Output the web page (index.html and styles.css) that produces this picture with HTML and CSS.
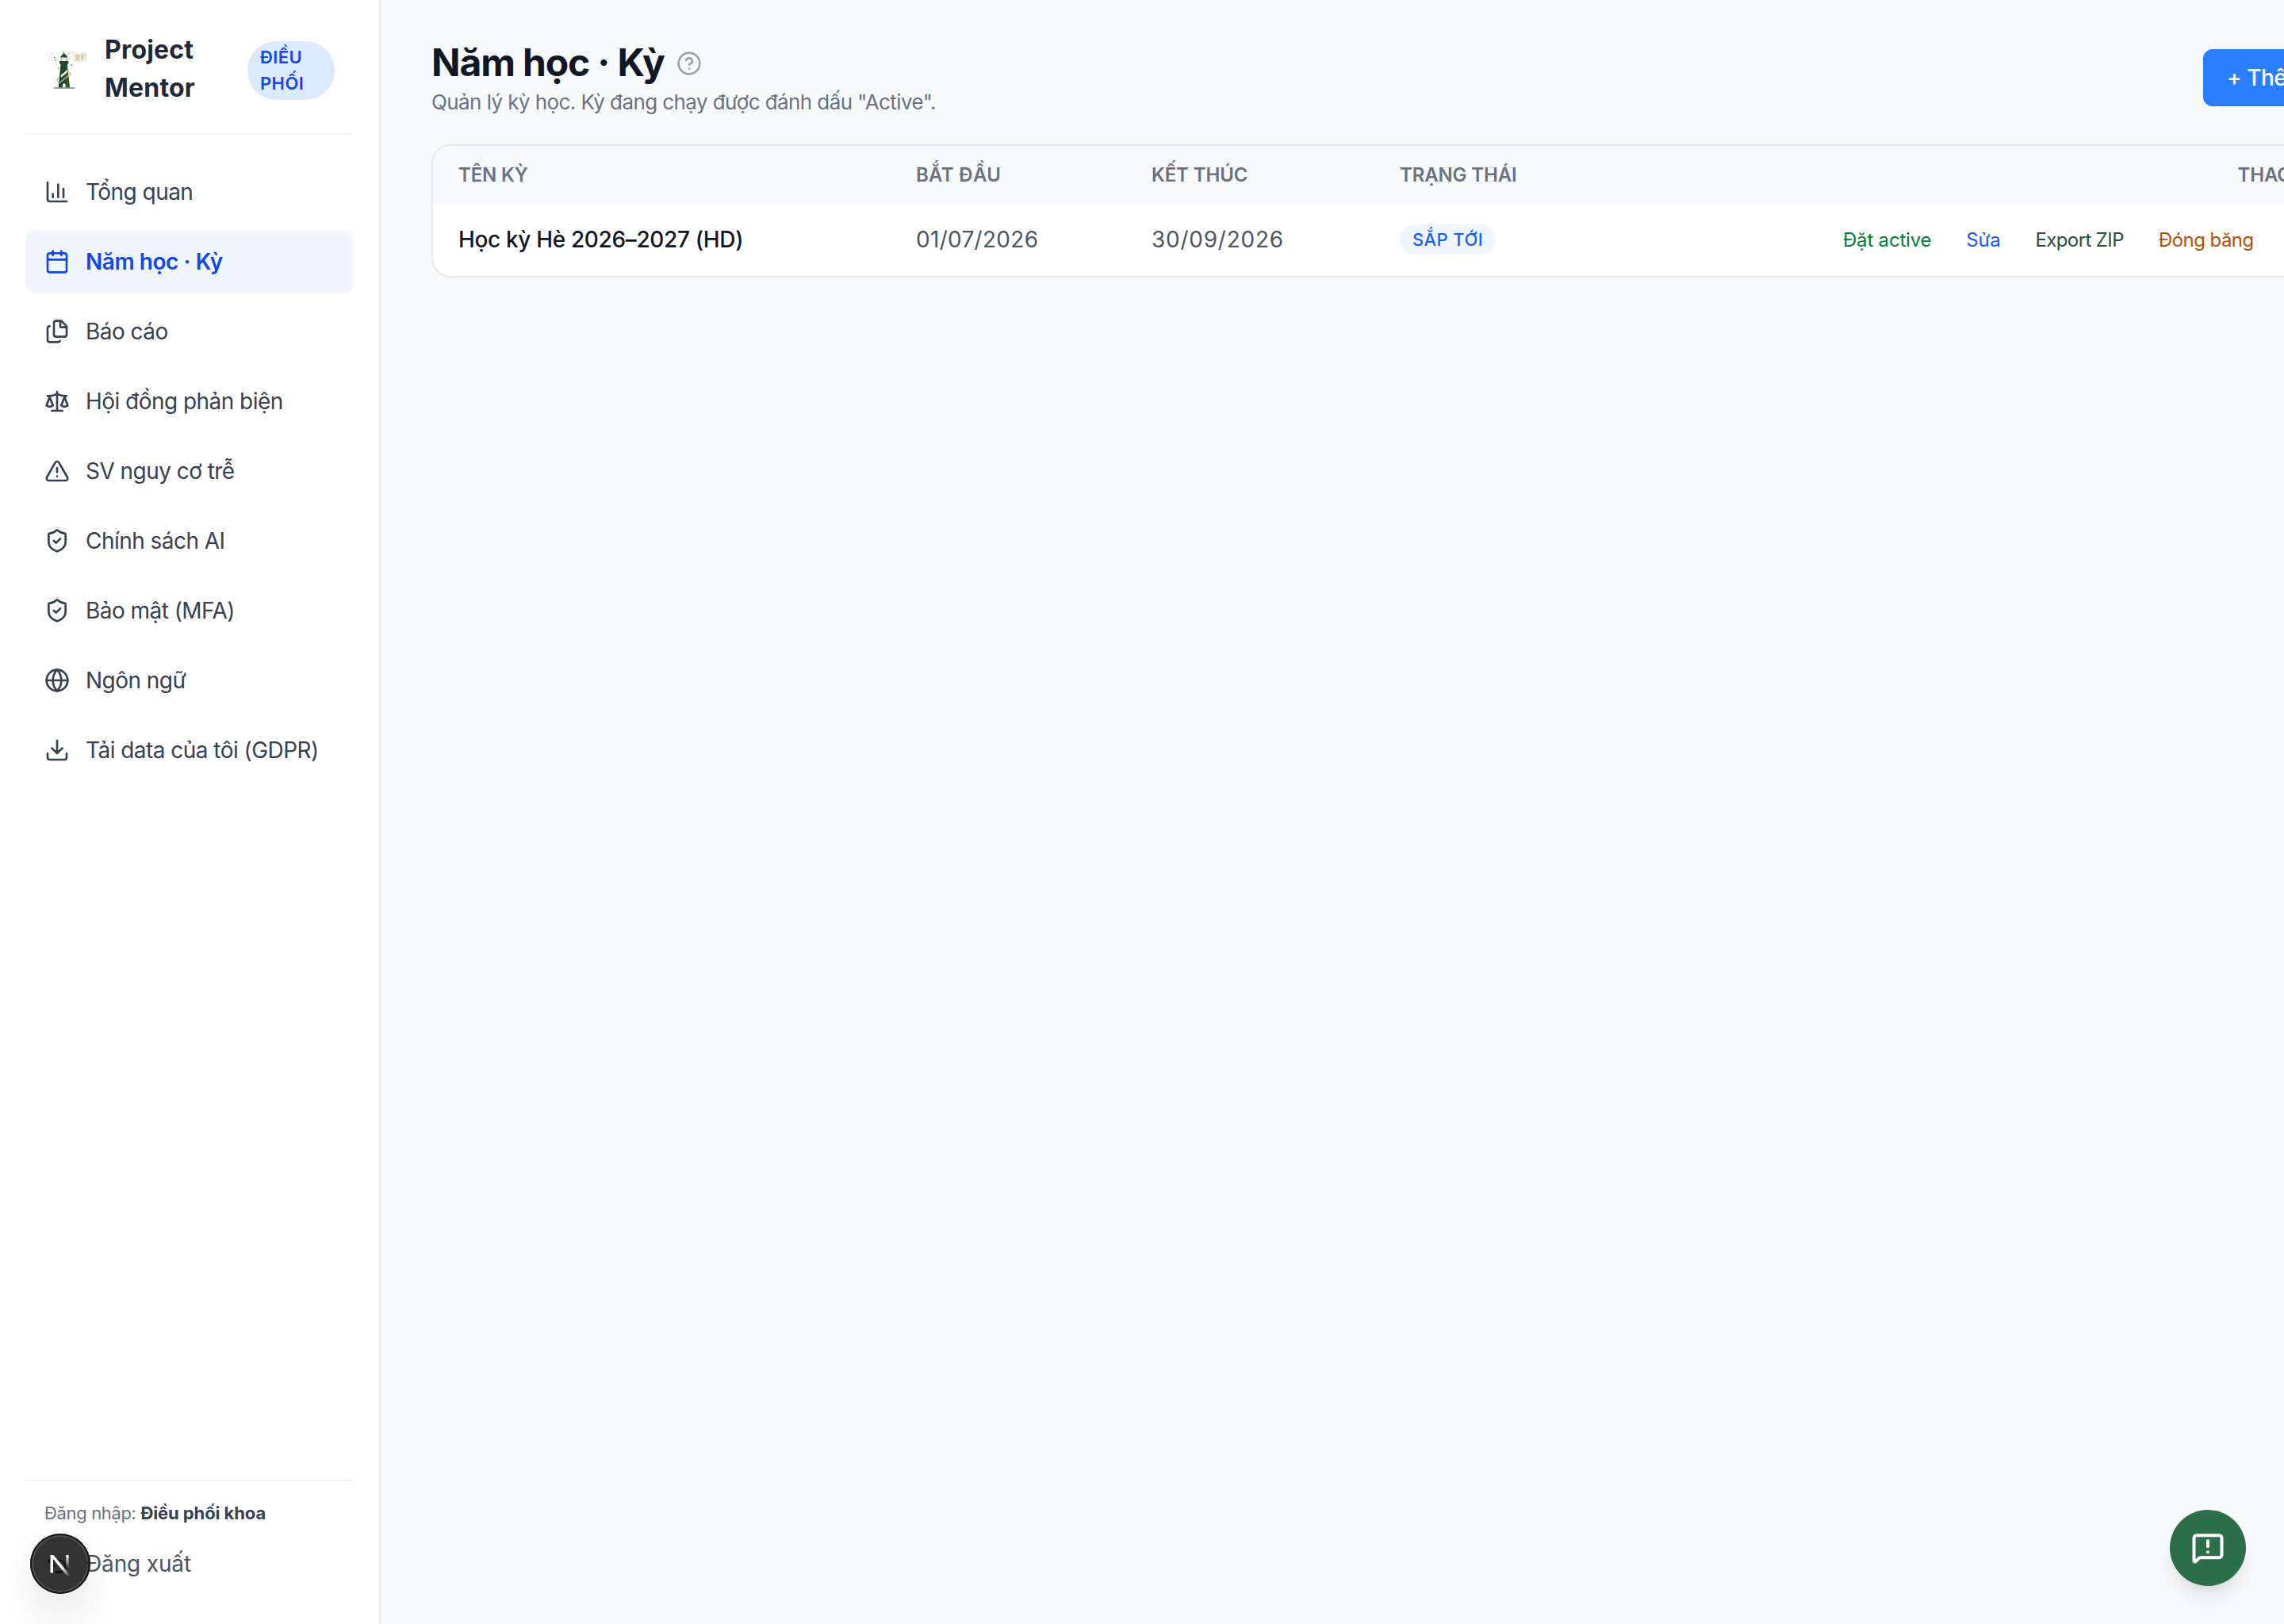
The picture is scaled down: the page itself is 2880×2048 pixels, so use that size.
FILE: index.html
```html
<!DOCTYPE html>
<html lang="vi">
<head>
<meta charset="utf-8">
<title>Project Mentor</title>
<link rel="stylesheet" href="styles.css">
</head>
<body>
<div class="app">
  <aside class="sidebar">
    <header class="brand">
      <svg class="brand-logo" viewBox="18 18 168 168" aria-hidden="true">
        <!-- open book on the right -->
        <path d="M126 40l14-8 12 6 10-7 14 6v30l-12 6-12-4-14 5-12-8z" fill="#f1eee3"/>
        <path d="M136 40l12 4v22l-12-4zM156 42l11-4v20l-11 5z" fill="#d3cbaa"/>
        <path d="M151 38v30M175 36v28" stroke="#e0dac2" stroke-width="3" fill="none"/>
        <!-- drifting specks -->
        <g fill="#c9cbbb"><circle cx="30" cy="41" r="2"/><circle cx="40" cy="50" r="2"/><circle cx="35" cy="61" r="2"/><circle cx="52" cy="43" r="2"/><circle cx="66" cy="38" r="2"/><circle cx="72" cy="50" r="2"/><circle cx="47" cy="63" r="2.4"/></g>
        <g fill="#6f7c68"><circle cx="56" cy="53" r="2.5"/><circle cx="61" cy="62" r="2.5"/><circle cx="45" cy="38" r="1.8"/></g>
        <g fill="#b08c50"><circle cx="111" cy="38" r="2.4"/><circle cx="123" cy="32" r="2"/><circle cx="121" cy="81" r="3"/><circle cx="71" cy="94" r="3"/><circle cx="64" cy="79" r="2"/><circle cx="113" cy="55" r="2"/></g>
        <!-- lighthouse -->
        <path d="M92 28v10" stroke="#24462f" stroke-width="2"/>
        <path d="M92 35l13 14-1 4H80l-1-4z" fill="#1f4a33"/>
        <path d="M81 53h22v14H81z" fill="#f4edcf"/>
        <path d="M81 53v14M103 53v14" stroke="#5d6b4c" stroke-width="2"/>
        <path d="M75 66h34v9l-4 3v7H79v-7l-4-3z" fill="#1f4a33"/>
        <path d="M79 84h26l9 82H71z" fill="#1d4630"/>
        <path d="M96 88h7l8 78H99z" fill="#3f5029"/>
        <path d="M80 119l25-20 1 8-24 21z" fill="#f4f1e6"/>
        <path d="M75 147l36-31 1 4-36 31z" fill="#d9cba2"/>
        <path d="M107 107c14 3 12 12-1 20M77 127c-15 8-15 17-2 18" stroke="#b08c50" stroke-width="3" fill="none"/>
        <path d="M87 166v-10a5 5 0 0 1 11 0v10z" fill="#fdfcf6"/>
        <path d="M54 166h78v4H54z" fill="#5c7d68"/>
      </svg>
      <div class="brand-name">Project<br>Mentor</div>
      <div class="role">ĐIỀU<br>PHỐI</div>
    </header>

    <nav class="nav">
      <a class="nav-item">
        <svg class="icon" viewBox="0 0 24 24"><path d="M3 3v16a2 2 0 0 0 2 2h16M18 17V9M13 17V5M8 17v-3"/></svg>
        <span>Tổng quan</span>
      </a>
      <a class="nav-item active">
        <svg class="icon" viewBox="0 0 24 24"><path d="M8 2v4M16 2v4M3 10h18"/><rect x="3" y="4" width="18" height="18" rx="2"/></svg>
        <span>Năm học · Kỳ</span>
      </a>
      <a class="nav-item">
        <svg class="icon" viewBox="0 0 24 24"><path d="M15 2h-4a2 2 0 0 0-2 2v11a2 2 0 0 0 2 2h8a2 2 0 0 0 2-2V8"/><path d="M16.706 2.706A2.4 2.4 0 0 0 15 2v5a1 1 0 0 0 1 1h5a2.4 2.4 0 0 0-.706-1.706z"/><path d="M5 7a2 2 0 0 0-2 2v11a2 2 0 0 0 2 2h8a2 2 0 0 0 1.732-1"/></svg>
        <span>Báo cáo</span>
      </a>
      <a class="nav-item">
        <svg class="icon" viewBox="0 0 24 24"><path d="M12 3v18M19 8l3 8a5 5 0 0 1-6 0zV7M3 7h1a17 17 0 0 0 8-2 17 17 0 0 0 8 2h1M5 8l3 8a5 5 0 0 1-6 0zV7M7 21h10"/></svg>
        <span>Hội đồng phản biện</span>
      </a>
      <a class="nav-item">
        <svg class="icon" viewBox="0 0 24 24"><path d="m21.73 18-8-14a2 2 0 0 0-3.48 0l-8 14A2 2 0 0 0 4 21h16a2 2 0 0 0 1.73-3M12 9v4M12 17h.01"/></svg>
        <span>SV nguy cơ trễ</span>
      </a>
      <a class="nav-item">
        <svg class="icon" viewBox="0 0 24 24"><path d="M20 13c0 5-3.500 7.500-7.660 8.950a1 1 0 0 1-.67-.01C7.500 20.500 4 18 4 13V6a1 1 0 0 1 1-1c2 0 4.500-1.200 6.240-2.720a1.170 1.170 0 0 1 1.520 0C14.510 3.810 17 5 19 5a1 1 0 0 1 1 1z"/><path d="m9 12 2 2 4-4"/></svg>
        <span>Chính sách AI</span>
      </a>
      <a class="nav-item">
        <svg class="icon" viewBox="0 0 24 24"><path d="M20 13c0 5-3.500 7.500-7.660 8.950a1 1 0 0 1-.67-.01C7.500 20.500 4 18 4 13V6a1 1 0 0 1 1-1c2 0 4.500-1.200 6.240-2.720a1.170 1.170 0 0 1 1.520 0C14.510 3.810 17 5 19 5a1 1 0 0 1 1 1z"/><path d="m9 12 2 2 4-4"/></svg>
        <span>Bảo mật (MFA)</span>
      </a>
      <a class="nav-item">
        <svg class="icon" viewBox="0 0 24 24"><circle cx="12" cy="12" r="10"/><path d="M12 2a14.500 14.500 0 0 0 0 20 14.500 14.500 0 0 0 0-20M2 12h20"/></svg>
        <span>Ngôn ngữ</span>
      </a>
      <a class="nav-item">
        <svg class="icon" viewBox="0 0 24 24"><path d="M12 15V3M21 15v4a2 2 0 0 1-2 2H5a2 2 0 0 1-2-2v-4M7 10l5 5 5-5"/></svg>
        <span>Tải data của tôi (GDPR)</span>
      </a>
    </nav>

    <footer class="account">
      <div class="account-user">Đăng nhập: <strong>Điều phối khoa</strong></div>
      <a class="logout">
        <svg class="icon" viewBox="0 0 24 24"><path d="M9 14 4 9l5-5M4 9h10.500a5.500 5.500 0 0 1 0 11H11"/></svg>
        <span>Đăng xuất</span>
      </a>
    </footer>
  </aside>

  <main class="main">
    <div class="page-head">
      <div>
        <h1 class="page-title">Năm học · Kỳ
          <svg class="help" viewBox="0 0 24 24"><circle cx="12" cy="12" r="10"/><path d="M9.090 9a3 3 0 0 1 5.830 1c0 2-3 3-3 3M12 17h.01"/></svg>
        </h1>
        <p class="page-sub">Quản lý kỳ học. Kỳ đang chạy được đánh dấu "Active".</p>
      </div>
      <button class="add-button">+ Thêm kỳ</button>
    </div>

    <section class="terms">
      <div class="terms-row terms-head">
        <span>TÊN KỲ</span>
        <span class="head-start">BẮT ĐẦU</span>
        <span>KẾT THÚC</span>
        <span>TRẠNG THÁI</span>
        <span class="head-actions">THAO TÁC</span>
      </div>
      <div class="terms-row terms-body">
        <span class="term-name">Học kỳ Hè 2026–2027 (HD)</span>
        <span class="date-start">01/07/2026</span>
        <span class="date-end">30/09/2026</span>
        <span class="status">SẮP TỚI</span>
        <div class="actions">
          <a class="act-activate">Đặt active</a>
          <a class="act-edit">Sửa</a>
          <a class="act-export">Export ZIP</a>
          <a class="act-freeze">Đóng băng</a>
        </div>
      </div>
    </section>
  </main>

  <div class="dev-badge">
    <svg class="dev-mark" viewBox="0 0 76 76">
      <defs>
        <linearGradient id="diag" gradientUnits="userSpaceOnUse" x1="38" y1="38" x2="49" y2="54"><stop offset="0.300" stop-color="#fff"/><stop offset="1" stop-color="#fff" stop-opacity="0"/></linearGradient>
        <linearGradient id="stem" gradientUnits="userSpaceOnUse" x1="47" y1="27" x2="47" y2="44"><stop offset="0" stop-color="#fff"/><stop offset="1" stop-color="#fff" stop-opacity="0"/></linearGradient>
      </defs>
      <path d="M45.300 27h3.400v17h-3.400z" fill="url(#stem)"/>
      <path d="M25.500 49.500V27h4L51 53.200l-3 2L29 32v17.500z" fill="url(#diag)"/>
    </svg>
  </div>
  <div class="feedback">
    <svg class="feedback-icon" viewBox="0 0 24 24"><path d="M22 17a2 2 0 0 1-2 2H6.828a2 2 0 0 0-1.414.586l-2.202 2.202A.71.71 0 0 1 2 21.286V5a2 2 0 0 1 2-2h16a2 2 0 0 1 2 2zM12 15h.01M12 7v4"/></svg>
  </div>
</div>
</body>
</html>
```
FILE: styles.css
```css
* { box-sizing: border-box; }

body {
  margin: 0;
  overflow: hidden;
  background: #f9fafc;
  font-family: Inter, "Noto Sans", sans-serif;
  font-size: 28px;
}

.app {
  position: relative;
  display: flex;
  height: 2048px;
  overflow: hidden;
}

.icon, .help, .feedback-icon {
  flex: none;
  fill: none;
  stroke: currentColor;
  stroke-width: 2;
  stroke-linecap: round;
  stroke-linejoin: round;
}

/* Sidebar */
.sidebar {
  flex: none;
  display: flex;
  flex-direction: column;
  width: 480px;
  padding: 32px 32px 0;
  background: #fff;
  border-right: 2px solid #e5e7eb;
}

.brand {
  display: flex;
  align-items: center;
  gap: 20px;
  height: 138px;
  padding: 0 24px 22px;
  border-bottom: 2px solid #f3f4f6;
}

.brand-logo { flex: none; width: 56px; height: 56px; }

.brand-name {
  padding-bottom: 4px;
  color: #1e2939;
  font-size: 32px;
  font-weight: 700;
  line-height: 48px;
  letter-spacing: 0.2px;
}

.role {
  width: 110px;
  margin-left: auto;
  padding: 4px 16px;
  border-radius: 37px;
  background: #dbeafe;
  color: #1447e6;
  font-size: 22px;
  font-weight: 600;
  line-height: 33px;
  letter-spacing: 0.4px;
}

.nav {
  display: flex;
  flex-direction: column;
  gap: 8px;
  margin-top: 32px;
}

.nav-item, .logout {
  display: flex;
  align-items: center;
  gap: 20px;
  height: 80px;
  padding: 0 24px;
  border-radius: 12px;
  color: #364153;
  line-height: 40px;
  letter-spacing: -0.54px;
  white-space: nowrap;
}

.nav-item .icon, .logout .icon { width: 32px; height: 32px; }

.nav-item.active {
  background: #eff6ff;
  color: #1447e6;
  font-weight: 600;
  letter-spacing: -0.45px;
}

.account {
  height: 182px;
  margin-top: auto;
  padding-top: 24px;
  border-top: 2px solid #f3f4f6;
}

.account-user {
  padding: 0 24px;
  color: #6a7282;
  font-size: 22px;
  line-height: 33px;
  letter-spacing: -0.35px;
}

.account-user strong {
  color: #364153;
  font-weight: 700;
  letter-spacing: -0.1px;
}

.logout {
  margin-top: 7px;
  color: #4a5565;
  letter-spacing: -0.15px;
}

/* Page */
.main {
  flex: none;
  width: 2496px;
  padding: 47px 0 0 64px;
}

.page-head {
  display: flex;
  align-items: flex-start;
  justify-content: space-between;
}

.page-title {
  display: flex;
  align-items: center;
  gap: 15px;
  margin: 0;
  color: #101828;
  font-size: 48px;
  font-weight: 700;
  line-height: 64px;
  letter-spacing: -1.15px;
}

.help {
  width: 32px;
  height: 32px;
  margin-top: 2px;
  color: #99a1af;
}

.page-sub {
  margin: 0;
  color: #6a7282;
  font-size: 26px;
  line-height: 36px;
  letter-spacing: -0.58px;
}

.add-button {
  width: 198px;
  height: 72px;
  margin-top: 15px;
  padding: 0 0 1px 30px;
  border: 0;
  border-radius: 12px;
  background: #2b7fff;
  color: #fff;
  font: 500 28px/40px Inter, sans-serif;
  letter-spacing: -0.5px;
  text-align: left;
  white-space: nowrap;
}

/* Terms table */
.terms {
  margin-top: 35px;
  overflow: hidden;
  border: 2px solid #e5e7eb;
  border-radius: 24px;
  background: #fff;
}

.terms-row {
  display: grid;
  grid-template-columns: 577px 297px 313px 559px 1fr;
  align-items: center;
  padding: 0 31px 2px 32px;
  white-space: nowrap;
}

.terms-head {
  height: 74px;
  background: #f9fafc;
  color: #6a7282;
  font-size: 24px;
  font-weight: 600;
  letter-spacing: -0.15px;
}

.head-start { letter-spacing: 0.3px; }
.head-actions { text-align: right; }

.terms-body {
  height: 90px;
  color: #4a5565;
}

.term-name {
  color: #101828;
  font-weight: 500;
  letter-spacing: -0.35px;
}

.date-start { letter-spacing: 0.3px; }
.date-end { letter-spacing: 0.75px; }

.status {
  justify-self: start;
  padding: 0 16px;
  border-radius: 19px;
  background: #eff6ff;
  color: #155dfc;
  font-size: 22px;
  font-weight: 500;
  line-height: 38px;
  letter-spacing: 0.4px;
}

.actions {
  display: flex;
  gap: 44px;
  font-size: 24px;
  letter-spacing: -0.2px;
}

.act-activate { color: #008236; }
.act-edit { color: #155dfc; }
.act-export { color: #24533b; letter-spacing: -0.6px; }
.act-freeze { color: #bb4d00; letter-spacing: -0.55px; }

/* Floating controls */
.dev-badge {
  position: absolute;
  left: 38px;
  bottom: 38px;
  width: 76px;
  height: 76px;
  border-radius: 50%;
  background: rgba(0, 0, 0, 0.8);
  box-shadow: inset 0 0 0 2px #171717, inset 0 0 0 4px rgba(255, 255, 255, 0.14), 0 32px 64px -16px rgba(0, 0, 0, 0.24), 0 0 48px rgba(0, 0, 0, 0.03);
}

.dev-mark { display: block; width: 76px; height: 76px; }

.feedback {
  position: absolute;
  left: 2736px;
  bottom: 48px;
  display: flex;
  align-items: center;
  justify-content: center;
  width: 96px;
  height: 96px;
  border-radius: 50%;
  background: #2d6e4a;
  color: #fff;
  box-shadow: 0 20px 30px -6px rgba(0, 0, 0, 0.1), 0 8px 12px -8px rgba(0, 0, 0, 0.1);
}

.feedback-icon { width: 42px; height: 42px; stroke-width: 2.3; }
```
